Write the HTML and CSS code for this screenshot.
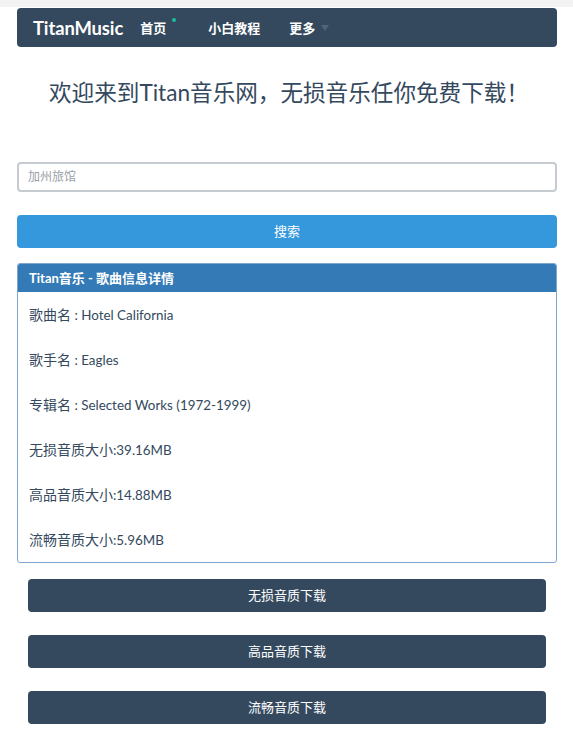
FILE: index.html
```html
<!DOCTYPE html>
<html lang="zh-CN">
<head>
<meta charset="utf-8">
<title>TitanMusic</title>
<link rel="stylesheet" href="styles.css">
</head>
<body>
<div class="topstrip"></div>
<div class="container">
  <nav class="navbar">
    <span class="brand">TitanMusic</span>
    <span class="nav-item home">首页<span class="dot"></span></span>
    <span class="nav-item tutorial">小白教程</span>
    <span class="nav-item more">更多<span class="caret"></span></span>
  </nav>

  <h1 class="title">欢迎来到Titan音乐网，无损音乐任你免费下载！</h1>

  <div class="search-input">加州旅馆</div>
  <div class="btn-search">搜索</div>

  <div class="panel">
    <div class="panel-heading">Titan音乐 - 歌曲信息详情</div>
    <div class="panel-body">
      <div class="row">歌曲名<span class="val"> : Hotel California</span></div>
      <div class="row">歌手名<span class="val"> : Eagles</span></div>
      <div class="row">专辑名<span class="val"> : Selected Works (1972-1999)</span></div>
      <div class="row">无损音质大小<span class="val">:39.16MB</span></div>
      <div class="row">高品音质大小<span class="val">:14.88MB</span></div>
      <div class="row">流畅音质大小<span class="val">:5.96MB</span></div>
    </div>
  </div>

  <div class="downloads">
    <div class="btn-dl">无损音质下载</div>
    <div class="btn-dl">高品音质下载</div>
    <div class="btn-dl">流畅音质下载</div>
  </div>
</div>
</body>
</html>
```

FILE: styles.css
```css
html, body {
  margin: 0;
  padding: 0;
  background: #ffffff;
}
body {
  font-family: Lato, "Noto Sans CJK SC", sans-serif;
  color: #34495e;
}
.topstrip {
  height: 7px;
  background: #f3f3f3;
}
.container {
  margin: 1px 16px 0 17px;
  display: flex;
  flex-direction: column;
}
.navbar {
  height: 39px;
  background: #34495e;
  border-radius: 4px;
  display: flex;
  align-items: center;
  padding-left: 16px;
  color: #ffffff;
}
.brand {
  font-size: 18.4px;
  font-weight: 700;
  letter-spacing: -0.1px;
}
.nav-item {
  font-size: 13px;
  font-weight: 700;
  position: relative;
  display: flex;
  align-items: center;
}
.home { margin-left: 17px; }
.tutorial { margin-left: 42px; }
.more { margin-left: 29px; }
.dot {
  position: absolute;
  left: 32px;
  top: 0;
  width: 4px;
  height: 4px;
  border-radius: 50%;
  background: #1abc9c;
}
.caret {
  margin-left: 6px;
  width: 0;
  height: 0;
  border-left: 4px solid transparent;
  border-right: 4px solid transparent;
  border-top: 6px solid #4e647a;
}
.title {
  margin: 30px 0 0 4px;
  height: 32px;
  line-height: 32px;
  text-align: center;
  font-size: 22.6px;
  font-weight: 400;
  color: #34495e;
}
.search-input {
  margin-top: 53px;
  height: 26px;
  border: 2px solid #c5cbd0;
  border-radius: 4px;
  padding-left: 9px;
  line-height: 26px;
  font-size: 12px;
  color: #9aa0a6;
  font-family: "Liberation Serif", "Noto Sans CJK SC", serif;
}
.btn-search {
  margin-top: 23px;
  height: 33px;
  line-height: 33px;
  background: #3598dc;
  border-radius: 4px;
  color: #ffffff;
  text-align: center;
  font-size: 13px;
}
.panel {
  margin-top: 15px;
  border: 1px solid #7ea6cf;
  border-radius: 3px;
  overflow: hidden;
}
.panel-heading {
  height: 28px;
  line-height: 28px;
  background: #337ab7;
  color: #ffffff;
  font-size: 13px;
  font-weight: 700;
  padding-left: 11px;
}
.panel-body {
  display: flex;
  flex-direction: column;
}
.row {
  height: 45px;
  line-height: 45px;
  padding-left: 11px;
  font-size: 14px;
  color: #34495e;
}
.val {
  font-size: 13.4px;
}
.downloads {
  margin: 16px 11px 0 11px;
  display: flex;
  flex-direction: column;
  gap: 23px;
}
.btn-dl {
  height: 33px;
  line-height: 33px;
  background: #34495e;
  border-radius: 4px;
  color: #ffffff;
  text-align: center;
  font-size: 13px;
}
```
